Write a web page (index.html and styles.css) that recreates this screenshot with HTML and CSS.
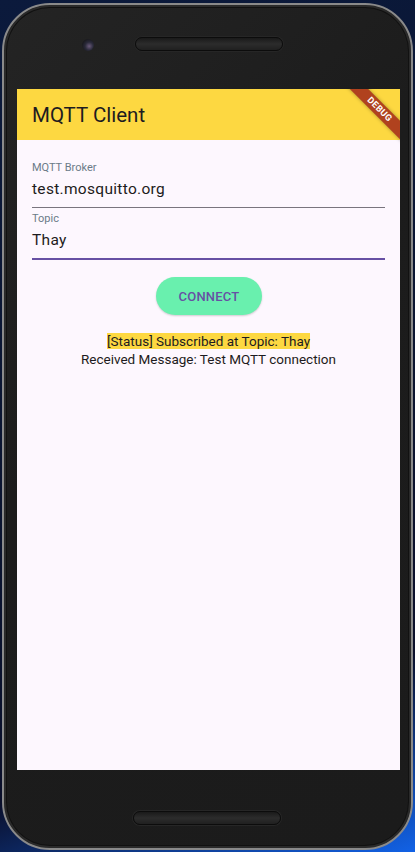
FILE: index.html
```html
<!DOCTYPE html>
<html>
<head>
<meta charset="utf-8">
<link rel="stylesheet" href="styles.css">
</head>
<body>
<div class="desk">
  <div class="phone">
    <div class="bezel-top">
      <div class="camera"></div>
      <div class="speaker"></div>
    </div>
    <div class="screen">
      <div class="appbar"><span class="title">MQTT Client</span></div>
      <div class="content">
        <div class="field">
          <div class="label">MQTT Broker</div>
          <div class="value">test.mosquitto.org</div>
          <div class="line"></div>
        </div>
        <div class="field">
          <div class="label">Topic</div>
          <div class="value">Thay</div>
          <div class="line focus"></div>
        </div>
        <div class="btn-row"><button class="connect">CONNECT</button></div>
        <div class="status"><span class="hl">[Status] Subscribed at Topic: Thay</span></div>
        <div class="msg">Received Message: Test MQTT connection</div>
      </div>
      <div class="banner">DEBUG</div>
    </div>
    <div class="bezel-bottom">
      <div class="speaker"></div>
    </div>
  </div>
</div>
</body>
</html>
```
FILE: styles.css
```css
html, body {
  margin: 0;
  padding: 0;
}
body {
  width: 415px;
  height: 852px;
  overflow: hidden;
  font-family: Roboto, "Noto Sans", sans-serif;
}
.desk {
  width: 415px;
  height: 852px;
  box-sizing: border-box;
  padding: 3px 2px 2px 2px;
  background: linear-gradient(160deg, #0b1a3c 0%, #0a1430 50%, #0a0f2a 80%, #1262e6 100%);
}
.phone {
  height: 847px;
  box-sizing: border-box;
  border-radius: 48px;
  background: linear-gradient(135deg, #242424 0%, #1c1c1c 40%, #1b1b1b 100%);
  border: 2px solid #8a8a8a;
  box-shadow: inset 0 0 0 2px #2a2a2a, inset 0 0 0 3px #111;
  display: flex;
  flex-direction: column;
  padding: 0 11px 0 13px;
}
.bezel-top {
  height: 84px;
  flex: none;
  display: flex;
  align-items: flex-start;
  padding-top: 32px;
  box-sizing: border-box;
}
.camera {
  width: 12px;
  height: 12px;
  border-radius: 50%;
  background: radial-gradient(circle at 60% 60%, #6a5a7a 0, #2a2a3a 40%, #1a1a1f 70%);
  margin-left: 65px;
  margin-top: 2px;
}
.speaker {
  width: 146px;
  height: 12px;
  border-radius: 7px;
  background: linear-gradient(#1a1a1a, #2c2c2c 50%, #202020);
  border: 1px solid #0c0c0c;
  box-shadow: 0 0 0 1px #262626;
}
.bezel-top .speaker {
  margin-left: 41px;
}
.screen {
  position: relative;
  overflow: hidden;
  width: 383px;
  height: 681px;
  flex: none;
  background: #fdf7fe;
}
.appbar {
  height: 51px;
  background: #fdd841;
  display: flex;
  align-items: center;
  padding-left: 15px;
}
.title {
  font-size: 20.5px;
  color: #1d1b20;
  margin-top: 1px;
}
.content {
  padding: 0 15px;
  display: flex;
  flex-direction: column;
}
.field {
  display: flex;
  flex-direction: column;
}
.field:first-child {
  padding-top: 21px;
}
.field + .field {
  padding-top: 4px;
}
.label {
  font-size: 11px;
  color: #6b7b88;
  line-height: 14px;
}
.value {
  font-size: 15.5px;
  color: #1d1b20;
  line-height: 20px;
  margin-top: 4px;
  letter-spacing: 0.3px;
}
.line {
  height: 1px;
  background: #79747e;
  margin-top: 8px;
}
.line.focus {
  height: 2px;
  background: #6750a4;
}
.btn-row {
  display: flex;
  justify-content: center;
  padding-top: 17px;
}
.connect {
  width: 106px;
  height: 38px;
  border: none;
  border-radius: 19px;
  background: #69f0ae;
  color: #6750a4;
  font-family: Roboto, sans-serif;
  font-size: 13px;
  font-weight: 500;
  letter-spacing: 0.2px;
  box-shadow: 0 1px 2px rgba(0,0,0,0.18);
  padding: 0;
  margin-left: 1px;
}
.status {
  text-align: center;
  margin-top: 18px;
  font-size: 13.5px;
  line-height: 17px;
  color: #1d1b20;
}
.hl {
  background: #fdd841;
}
.msg {
  text-align: center;
  font-size: 13.5px;
  line-height: 18px;
  color: #1d1b20;
}
.banner {
  position: absolute;
  top: 14px;
  right: -40px;
  width: 121px;
  height: 13px;
  transform: rotate(45deg);
  background: #b0421e;
  color: #fff;
  font-size: 9px;
  font-weight: 700;
  text-align: center;
  line-height: 13px;
  letter-spacing: 0.4px;
  box-shadow: 0 0 4px rgba(0,0,0,0.35);
}
.bezel-bottom {
  flex: 1;
  display: flex;
  justify-content: center;
  padding-top: 41px;
  box-sizing: border-box;
}
.bezel-bottom .speaker {
  margin-left: -4px;
}
```
